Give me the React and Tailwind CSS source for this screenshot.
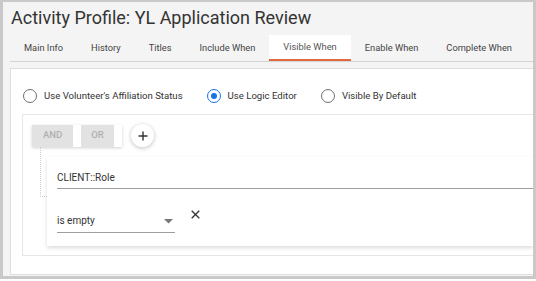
import React from 'react';

const tabs = ['Main Info', 'History', 'Titles', 'Include When', 'Visible When', 'Enable When', 'Complete When'];

const Radio = ({ checked, label }) => (
    <label className="flex items-center">
        {checked ? (
            <span className="flex h-[14px] w-[14px] shrink-0 items-center justify-center rounded-full border-[1.5px] border-[#1a73e8]">
                <span className="h-[6px] w-[6px] rounded-full bg-[#1a73e8]"></span>
            </span>
        ) : (
            <span className="h-[14px] w-[14px] shrink-0 rounded-full border border-[#6f6f6f]"></span>
        )}
        <span className="ml-[7px] text-[9.6px] leading-[12px] text-[#333]">{label}</span>
    </label>
);

const App = () => {
    return (
        <div className="w-[536px] bg-white font-['Roboto',sans-serif]">
            <div className="overflow-hidden border-t-2 border-l-[3px] border-r-[3px] border-b-[3px] border-[#c9c9c9] bg-[#f4f4f4]">
                {/* Title */}
                <h1 className="pl-[8px] pt-[5px] text-[18px] leading-[21px] font-normal text-[#333]">
                    Activity Profile: YL Application Review
                </h1>

                {/* Tabs */}
                <div className="mt-[7px] ml-[7px] flex border-b border-[#d4d4d4]">
                    {tabs.map((tab) => (
                        <div
                            key={tab}
                            className={
                                tab === 'Visible When'
                                    ? 'flex h-[26px] shrink-0 items-center border-b-2 border-[#e2693f] bg-white px-[14px] text-[9.3px] text-[#555]'
                                    : 'flex h-[26px] shrink-0 items-center px-[14px] text-[9.3px] text-[#444]'
                            }
                        >
                            {tab}
                        </div>
                    ))}
                </div>

                {/* Panel */}
                <div className="mt-[6px] mb-[1px] ml-[7px] border-t border-l border-b border-[#dedede] bg-white pt-[20px] pb-[18px]">
                    <div className="flex gap-[24px] pl-[12px]">
                        <Radio label="Use Volunteer's Affiliation Status" />
                        <Radio checked label="Use Logic Editor" />
                        <Radio label="Visible By Default" />
                    </div>

                    {/* Logic editor box */}
                    <div className="mt-[11px] ml-[11px] border-t border-l border-b border-[#e6e6e6] pt-[9px] pb-[9px] pl-[9px]">
                        <div className="flex h-[23px] items-center">
                            <div className="flex h-[22px] bg-white shadow-[0_1px_3px_rgba(0,0,0,0.18)]">
                                <div className="mr-[8px] flex w-[41px] items-center justify-center bg-[#e2e2e2] text-[9.5px] font-medium text-[#b0b0b0]">AND</div>
                                <div className="mr-[8px] flex w-[33px] items-center justify-center bg-[#e2e2e2] text-[9.5px] font-medium text-[#b0b0b0]">OR</div>
                            </div>
                            <div className="ml-[9px] flex h-[23px] w-[23px] items-center justify-center rounded-full bg-white shadow-[0_1px_4px_rgba(0,0,0,0.25)]">
                                <svg width="10" height="10" viewBox="0 0 10 10">
                                    <path d="M5 0.5V9.5M0.5 5H9.5" stroke="#333" strokeWidth="1.4" />
                                </svg>
                            </div>
                        </div>

                        <div className="flex">
                            <div className="ml-[8px] h-[50px] w-[7px] shrink-0 border-l border-b border-dotted border-[#cfcfcf]"></div>
                            <div className="mt-[10px] flex-1 bg-white pt-[15px] pb-[13px] pl-[10px] shadow-[0_2px_4px_rgba(0,0,0,0.14)]">
                                <div className="border-b border-[#9e9e9e] pb-[4px] text-[10px] leading-[12px] text-[#333]">CLIENT::Role</div>
                                <div className="mt-[21px] flex items-start">
                                    <div className="flex w-[118px] items-center justify-between border-b border-[#9e9e9e] pt-[5px] pr-[2px] pb-[5px]">
                                        <span className="text-[10px] leading-[12px] text-[#333]">is empty</span>
                                        <svg width="9" height="5" viewBox="0 0 9 5">
                                            <path d="M0 0H9L4.5 4.5Z" fill="#777" />
                                        </svg>
                                    </div>
                                    <svg className="ml-[16px]" width="9" height="9" viewBox="0 0 9 9">
                                        <path d="M0.7 0.7L8.3 8.3M8.3 0.7L0.7 8.3" stroke="#333" strokeWidth="1.3" />
                                    </svg>
                                </div>
                            </div>
                        </div>
                    </div>
                </div>
            </div>
        </div>
    );
};

export default App;
